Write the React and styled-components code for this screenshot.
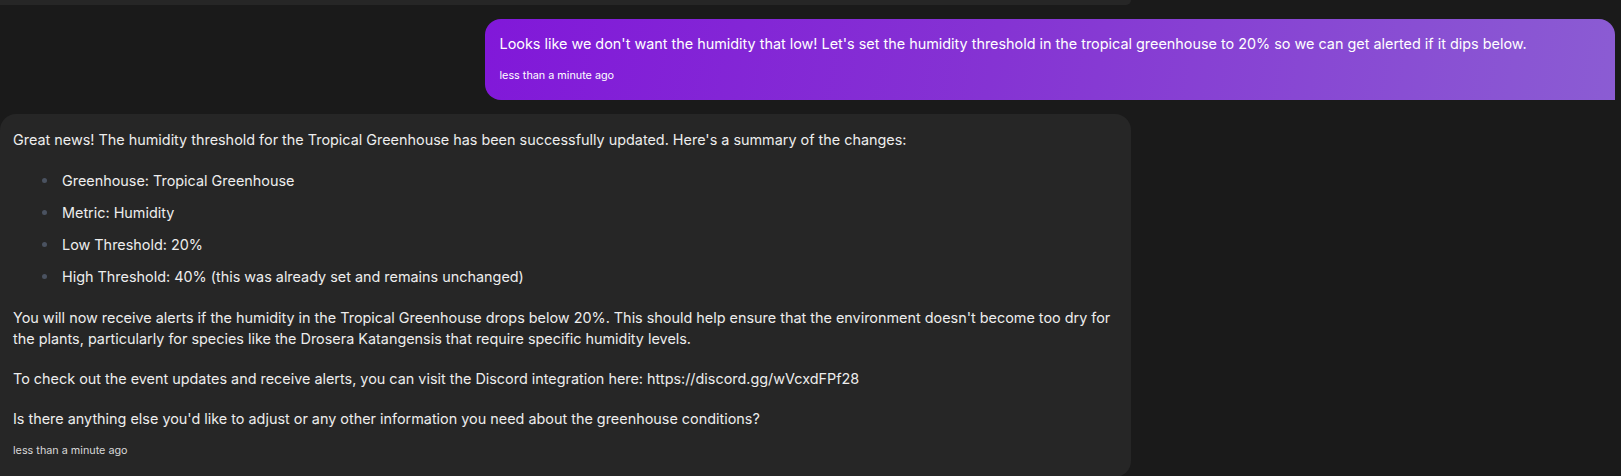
import React from "react";
import styled, { createGlobalStyle } from "styled-components";

const GlobalStyle = createGlobalStyle`
  html, body {
    margin: 0;
    padding: 0;
    background: #1a1a1a;
    font-family: Inter, "Noto Sans", "Liberation Sans", sans-serif;
    -webkit-font-smoothing: antialiased;
  }
`;

const Thread = styled.div`
  display: flex;
  flex-direction: column;
  gap: 14px;
  padding-right: 6px;
  height: 476px;
  overflow: hidden;
  box-sizing: border-box;
`;

const Row = styled.div`
  display: flex;
  justify-content: ${(p) => (p.$user ? "flex-end" : "flex-start")};
  flex-shrink: 0;
`;

const Bubble = styled.div`
  box-sizing: border-box;
  width: 70%;
  font-size: 14.4px;
  line-height: 21px;
  color: ${(p) => (p.$user ? "#ffffff" : "#ededed")};
  background: ${(p) =>
    p.$user
      ? "linear-gradient(100deg, #8118d9 0%, #8533d3 45%, #8b5cd3 100%)"
      : "#262626"};
  border-radius: ${(p) => (p.$user ? "16px 16px 0 16px" : "16px 16px 16px 0")};
  padding: ${(p) => (p.$user ? "14px 15px 16px 15px" : "15px 15px 18px 13px")};
`;

const ClippedBubble = styled.div`
  width: 70%;
  height: 5px;
  background: #262626;
  border-radius: 0 0 16px 0;
`;

const Para = styled.p`
  margin: 0 0 19px;
  &:last-of-type {
    margin-bottom: 0;
  }
`;

const List = styled.ul`
  list-style: none;
  margin: 20px 0;
  padding: 0 0 0 29px;
`;

const Item = styled.li`
  display: flex;
  align-items: flex-start;
  & + & {
    margin-top: 11px;
  }
  &::before {
    content: "";
    flex: none;
    width: 5px;
    height: 5px;
    border-radius: 50%;
    background: #4a5260;
    margin: 8px 15px 0 0;
  }
`;

const Stamp = styled.div`
  margin-top: 14px;
  font-size: 10.8px;
  line-height: 16px;
  color: ${(p) => (p.$user ? "#ffffff" : "#d8d8d8")};
`;

const items = [
  "Greenhouse: Tropical Greenhouse",
  "Metric: Humidity",
  "Low Threshold: 20%",
  "High Threshold: 40% (this was already set and remains unchanged)",
];

export default function App() {
  return (
    <>
      <GlobalStyle />
      <Thread>
        <Row>
          <ClippedBubble />
        </Row>
        <Row $user>
          <Bubble $user>
            <Para>
              Looks like we don't want the humidity that low! Let's set the humidity threshold in
              the tropical greenhouse to 20% so we can get alerted if it dips below.
            </Para>
            <Stamp $user>less than a minute ago</Stamp>
          </Bubble>
        </Row>
        <Row>
          <Bubble>
            <Para>
              Great news! The humidity threshold for the Tropical Greenhouse has been successfully
              updated. Here's a summary of the changes:
            </Para>
            <List>
              {items.map((t) => (
                <Item key={t}>{t}</Item>
              ))}
            </List>
            <Para>
              You will now receive alerts if the humidity in the Tropical Greenhouse drops below
              20%. This should help ensure that the environment doesn't become too dry for the
              plants, particularly for species like the Drosera Katangensis that require specific
              humidity levels.
            </Para>
            <Para>
              To check out the event updates and receive alerts, you can visit the Discord
              integration here: https://discord.gg/wVcxdFPf28
            </Para>
            <Para>
              Is there anything else you'd like to adjust or any other information you need about
              the greenhouse conditions?
            </Para>
            <Stamp>less than a minute ago</Stamp>
          </Bubble>
        </Row>
      </Thread>
    </>
  );
}
